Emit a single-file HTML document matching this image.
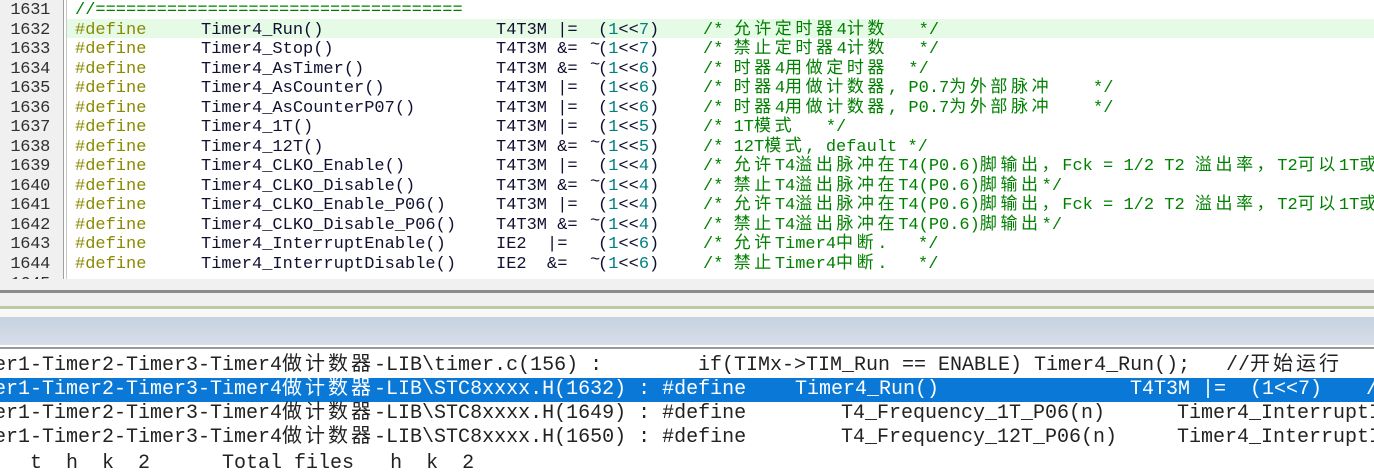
<!DOCTYPE html><html><head><meta charset="utf-8"><style>
*{margin:0;padding:0;box-sizing:border-box}
body{width:1374px;height:459px;overflow:hidden;background:#fff;position:relative;font-family:"Liberation Mono","Noto Sans CJK SC",monospace}
.ed{position:absolute;left:0;top:0;width:1374px;height:279px;background:#fff;overflow:hidden}
.gut{position:absolute;left:0;top:0;width:64px;height:279px;background:#f0f0f0;border-right:1px solid #a0a0a0}
.gl{position:absolute;left:66px;top:0;width:1px;height:279px;background:#c8c8c8}
.ln{position:absolute;left:0;width:50px;text-align:right;font-size:17px;color:#303030;line-height:19.5px;letter-spacing:-0.3px}
.row{position:absolute;left:0;width:1374px;height:19.5px;font-size:17px;line-height:19.5px;white-space:pre}
.row span{position:absolute;top:0}
.d{color:#8a8a00}.t{color:#101030}.n{color:#008080}.c{color:#008000}
.k{letter-spacing:3.6px}
.hl{position:absolute;left:67px;width:1307px;height:19px;background:#e6fbe6}
.out{position:absolute;left:0;width:1374px;height:24px;font-size:20px;line-height:24px;white-space:pre;color:#222}
.out span{position:absolute;top:0}
.k2{letter-spacing:3px}
</style></head><body>
<div class="ed">
<div class="hl" style="top:19px"></div>
<div class="gut"></div><div class="gl"></div>
<div id="lines"></div>
</div>
<div style="position:absolute;left:0;top:279px;width:1374px;height:12px;background:#f0f0f0"></div>
<div style="position:absolute;left:0;top:290px;width:1374px;height:3px;background:#8c8c8c"></div>
<div style="position:absolute;left:0;top:293px;width:1374px;height:13px;background:#f0f0f0"></div>
<div style="position:absolute;left:0;top:306px;width:1374px;height:3px;background:#bccaa4"></div>
<div style="position:absolute;left:0;top:309px;width:1374px;height:8px;background:#f8f8f8"></div>
<div style="position:absolute;left:0;top:317px;width:1374px;height:28px;background:linear-gradient(#c6d2e0,#d6dee8)"></div>
<div style="position:absolute;left:0;top:345px;width:1374px;height:2px;background:#fff"></div>
<div style="position:absolute;left:0;top:347px;width:1374px;height:2px;background:#9a9a9a"></div>
<div style="position:absolute;left:0;top:378px;width:1374px;height:24px;background:#0a78d7"></div>

<div class="out" style="top:354px"><span style="left:-6px">er1-Timer2-Timer3-Timer4<b class="k2" style="font-weight:normal">做计数器</b>-LIB\timer.c(156) :</span><span style="left:698px">if(TIMx-&gt;TIM_Run == ENABLE) Timer4_Run();</span><span style="left:1226px">//<b class="k2" style="font-weight:normal">开始运行</b></span></div>
<div class="out" style="top:378px;color:#fff"><span style="left:-6px">er1-Timer2-Timer3-Timer4<b class="k2" style="font-weight:normal">做计数器</b>-LIB\STC8xxxx.H(1632) : #define</span><span style="left:795px">Timer4_Run()</span><span style="left:1130px">T4T3M |=  (1&lt;&lt;7)</span><span style="left:1366px">/</span></div>
<div class="out" style="top:402px"><span style="left:-6px">er1-Timer2-Timer3-Timer4<b class="k2" style="font-weight:normal">做计数器</b>-LIB\STC8xxxx.H(1649) : #define</span><span style="left:841px">T4_Frequency_1T_P06(n)</span><span style="left:1177px">Timer4_InterruptI</span></div>
<div class="out" style="top:426px"><span style="left:-6px">er1-Timer2-Timer3-Timer4<b class="k2" style="font-weight:normal">做计数器</b>-LIB\STC8xxxx.H(1650) : #define</span><span style="left:841px">T4_Frequency_12T_P06(n)</span><span style="left:1177px">Timer4_InterruptI</span></div>
<div class="out" style="top:452px"><span style="left:-6px">   t  h  k  2      Total files   h  k  2</span></div>

<script>
var L=[
["1631",null,null,null,null,null,"//===================================="],
["1632","#define","Timer4_Run()","T4T3M |=","","(1<<7)","/* 允许定时器4计数   */"],
["1633","#define","Timer4_Stop()","T4T3M &=","~","(1<<7)","/* 禁止定时器4计数   */"],
["1634","#define","Timer4_AsTimer()","T4T3M &=","~","(1<<6)","/* 时器4用做定时器  */"],
["1635","#define","Timer4_AsCounter()","T4T3M |=","","(1<<6)","/* 时器4用做计数器, P0.7为外部脉冲    */"],
["1636","#define","Timer4_AsCounterP07()","T4T3M |=","","(1<<6)","/* 时器4用做计数器, P0.7为外部脉冲    */"],
["1637","#define","Timer4_1T()","T4T3M |=","","(1<<5)","/* 1T模式   */"],
["1638","#define","Timer4_12T()","T4T3M &=","~","(1<<5)","/* 12T模式, default */"],
["1639","#define","Timer4_CLKO_Enable()","T4T3M |=","","(1<<4)","/* 允许T4溢出脉冲在T4(P0.6)脚输出，Fck = 1/2 T2 溢出率，T2可以1T或"],
["1640","#define","Timer4_CLKO_Disable()","T4T3M &=","~","(1<<4)","/* 禁止T4溢出脉冲在T4(P0.6)脚输出*/"],
["1641","#define","Timer4_CLKO_Enable_P06()","T4T3M |=","","(1<<4)","/* 允许T4溢出脉冲在T4(P0.6)脚输出，Fck = 1/2 T2 溢出率，T2可以1T或"],
["1642","#define","Timer4_CLKO_Disable_P06()","T4T3M &=","~","(1<<4)","/* 禁止T4溢出脉冲在T4(P0.6)脚输出*/"],
["1643","#define","Timer4_InterruptEnable()","IE2  |=","","(1<<6)","/* 允许Timer4中断.   */"],
["1644","#define","Timer4_InterruptDisable()","IE2  &=","~","(1<<6)","/* 禁止Timer4中断.   */"],
["1645",null,null,null,null,null,""]];
function esc(s){return s.replace(/&/g,"&amp;").replace(/</g,"&lt;").replace(/>/g,"&gt;")}
function cj(s){return esc(s).replace(/([\u3000-\u9fff\uff00-\uffef]+)/g,'<i class="k" style="font-style:normal">$1</i>')}
var h="";
L.forEach(function(r,i){var y=1+i*19.54;
h+='<div class="ln" style="top:'+y+'px">'+r[0]+'</div><div class="row" style="top:'+y+'px">';
if(r[1]){h+='<span class="d" style="left:75px">'+r[1]+'</span><span class="t" style="left:201px">'+r[2]+'</span><span class="t" style="left:496px">'+esc(r[3])+'</span>';
if(r[4])h+='<span class="t" style="left:590px;top:-4px">~</span>';
h+='<span class="t" style="left:598px">(<b class="n" style="font-weight:normal">1</b>&lt;&lt;<b class="n" style="font-weight:normal">'+r[5].charAt(4)+'</b>)</span>';}
h+='<span class="c" style="left:'+(r[1]?703:75)+'px">'+cj(r[6])+'</span></div>';});
document.getElementById("lines").innerHTML=h;
</script>
</body></html>
